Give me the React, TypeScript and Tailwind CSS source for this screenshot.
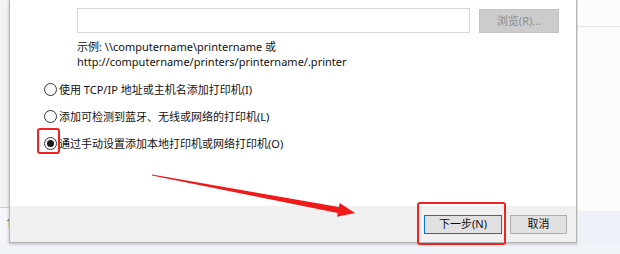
import React from "react";

const font = "font-['Noto_Sans','Noto_Sans_CJK_SC',sans-serif]";

function Radio({ checked, label }: { checked?: boolean; label: string }) {
  return (
    <div className="flex items-center h-[15px]">
      <span className="w-[13px] h-[13px] rounded-full border border-[#333] bg-white flex items-center justify-center shrink-0">
        {checked && <span className="w-[7px] h-[7px] rounded-full bg-[#1a1a1a]" />}
      </span>
      <span className="ml-[2px] text-[11px] leading-[15px] text-[#111] whitespace-nowrap">{label}</span>
    </div>
  );
}

export default function App() {
  return (
    <div className={`relative w-[620px] h-[254px] overflow-hidden bg-[#f0f3f8] ${font}`}>
      <div className="flex h-[243px]">
        {/* left strip */}
        <div className="w-[9px] shrink-0 flex flex-col bg-[#f3f3f3]">
          <div className="h-[208px] border-b border-[#c5ccd6]" />
          <div className="flex-1 bg-[#f4f6f9] text-[11px] text-[#444] pl-[6px] pt-[9px] leading-none">1</div>
        </div>
        {/* dialog */}
        <div className="w-[568px] shrink-0 flex flex-col bg-white border-l border-r border-b border-[#b4b4b4] shadow-[0_1px_3px_rgba(0,0,0,0.25)]">
          <div className="flex-1 pl-[67px] pt-[8px]">
            <div className="flex items-start">
              <div className="w-[393px] h-[25px] border border-[#d6d6d6] bg-white" />
              <div className="ml-[9px] mt-[1px] w-[80px] h-[24px] bg-[#cccccc] border border-[#c2c2c2] flex items-center justify-center text-[11px] text-[#8c8c8c]">
                浏览(R)...
              </div>
            </div>
            <div className="mt-[6px] text-[11px] leading-[15px] text-[#111]">
              <div>示例: \\computername\printername 或</div>
              <div>http://computername/printers/printername/.printer</div>
            </div>
            <div className="-ml-[33px] mt-[13px] flex flex-col gap-[12px]">
              <Radio label="使用 TCP/IP 地址或主机名添加打印机(I)" />
              <Radio label="添加可检测到蓝牙、无线或网络的打印机(L)" />
              <Radio checked label="通过手动设置添加本地打印机或网络打印机(O)" />
            </div>
          </div>
          <div className="h-[36px] bg-[#f0f0f0] flex items-start justify-end pt-[9px] pr-[9px] gap-[8px]">
            <div className="w-[78px] h-[19px] bg-[#e1e1e1] border border-[#0078d7] flex items-center justify-center text-[11px] text-[#111]">
              下一步(N)
            </div>
            <div className="w-[57px] h-[19px] bg-[#e1e1e1] border border-[#adadad] flex items-center justify-center text-[11px] text-[#111]">
              取消
            </div>
          </div>
        </div>
        {/* right strip */}
        <div className="flex-1 flex flex-col bg-[#fcfcfc] ml-[1px]">
          <div className="h-[27px] border-b border-[#e6e6e6]" />
          <div className="h-[184px]" />
          <div className="flex-1 bg-[#eef2f8]" />
        </div>
      </div>

      {/* red highlight boxes */}
      <div className="absolute left-[37px] top-[128px] w-[23px] h-[26px] border-2 border-[#f02222] rounded-[3px]" />
      <div className="absolute left-[417px] top-[202px] w-[89px] h-[43px] border-2 border-[#f02222] rounded-[3px]" />

      {/* red arrow */}
      <svg className="absolute left-0 top-0" width="620" height="254" viewBox="0 0 620 254">
        <polygon
          fill="#f01a1a"
          points="152.1,174.4 338.9,206.9 339.6,203.0 355,213 337.0,216.8 337.7,212.9 151.9,175.6"
        />
      </svg>
    </div>
  );
}
